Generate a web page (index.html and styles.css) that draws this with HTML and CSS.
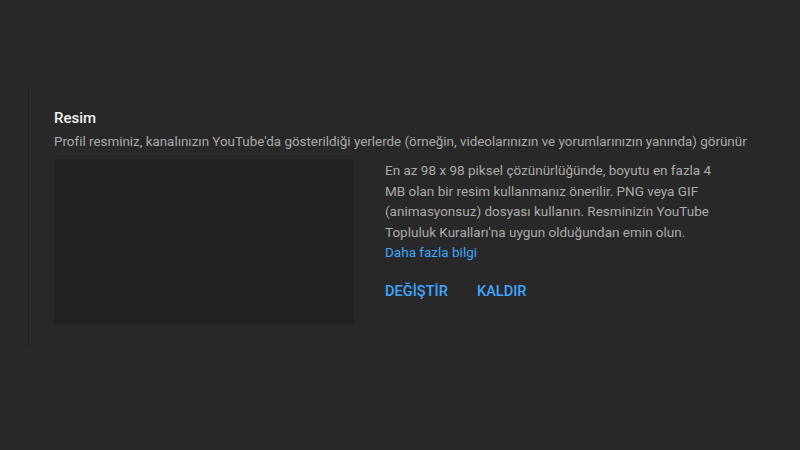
FILE: index.html
```html
<!DOCTYPE html>
<html lang="tr">
<head>
  <meta charset="UTF-8">
  <meta name="viewport" content="width=device-width, initial-scale=1.0">
  <title>Resim</title>
  <link rel="stylesheet" href="styles.css">
</head>
<body>
  <section class="picture-section">
    <h2 class="section-title">Resim</h2>
    <p class="section-desc">Profil resminiz, kanalınızın YouTube'da gösterildiği yerlerde (örneğin, videolarınızın ve yorumlarınızın yanında) görünür</p>
    <div class="picture-row">
      <div class="picture-box"></div>
      <div class="picture-info">
        <p class="info-text">En az 98 x 98 piksel çözünürlüğünde, boyutu en fazla 4 MB olan bir resim kullanmanız önerilir. PNG veya GIF (animasyonsuz) dosyası kullanın. Resminizin YouTube Topluluk Kuralları'na uygun olduğundan emin olun.</p>
        <a class="info-link" href="#">Daha fazla bilgi</a>
        <div class="actions">
          <button class="action-btn">DEĞİŞTİR</button>
          <button class="action-btn">KALDIR</button>
        </div>
      </div>
    </div>
  </section>
</body>
</html>
```

FILE: styles.css
```css
body {
  margin: 0;
  padding: 88px 0 0 28px;
  background: #282828;
  font-family: Roboto, "Noto Sans", Arial, sans-serif;
  height: 100vh;
  box-sizing: border-box;
}

.picture-section {
  border-left: 1px solid #1e1e1e;
  padding: 20px 0 20px 25px;
  height: 218px;
}

.section-title {
  margin: 0;
  font-size: 15px;
  font-weight: 500;
  color: #f1f1f1;
  line-height: 20px;
}

.section-desc {
  margin: 4px 0 0;
  font-size: 13.4px;
  color: #aaaaaa;
  line-height: 20px;
}

.picture-row {
  display: flex;
  gap: 31px;
  margin-top: 7px;
}

.picture-box {
  width: 300px;
  height: 166px;
  background: #212121;
  flex-shrink: 0;
}

.picture-info {
  width: 336px;
  padding-top: 1px;
}

.info-text {
  margin: 0;
  font-size: 13.5px;
  line-height: 20.5px;
  color: #aaaaaa;
}

.info-link {
  display: block;
  font-size: 13.5px;
  line-height: 20px;
  color: #3ea6ff;
  text-decoration: none;
}

.actions {
  display: flex;
  gap: 29px;
  margin-top: 20px;
}

.action-btn {
  background: none;
  border: none;
  padding: 0;
  font-family: inherit;
  font-size: 14.6px;
  font-weight: 500;
  color: #3ea6ff;
  cursor: pointer;
}
```
